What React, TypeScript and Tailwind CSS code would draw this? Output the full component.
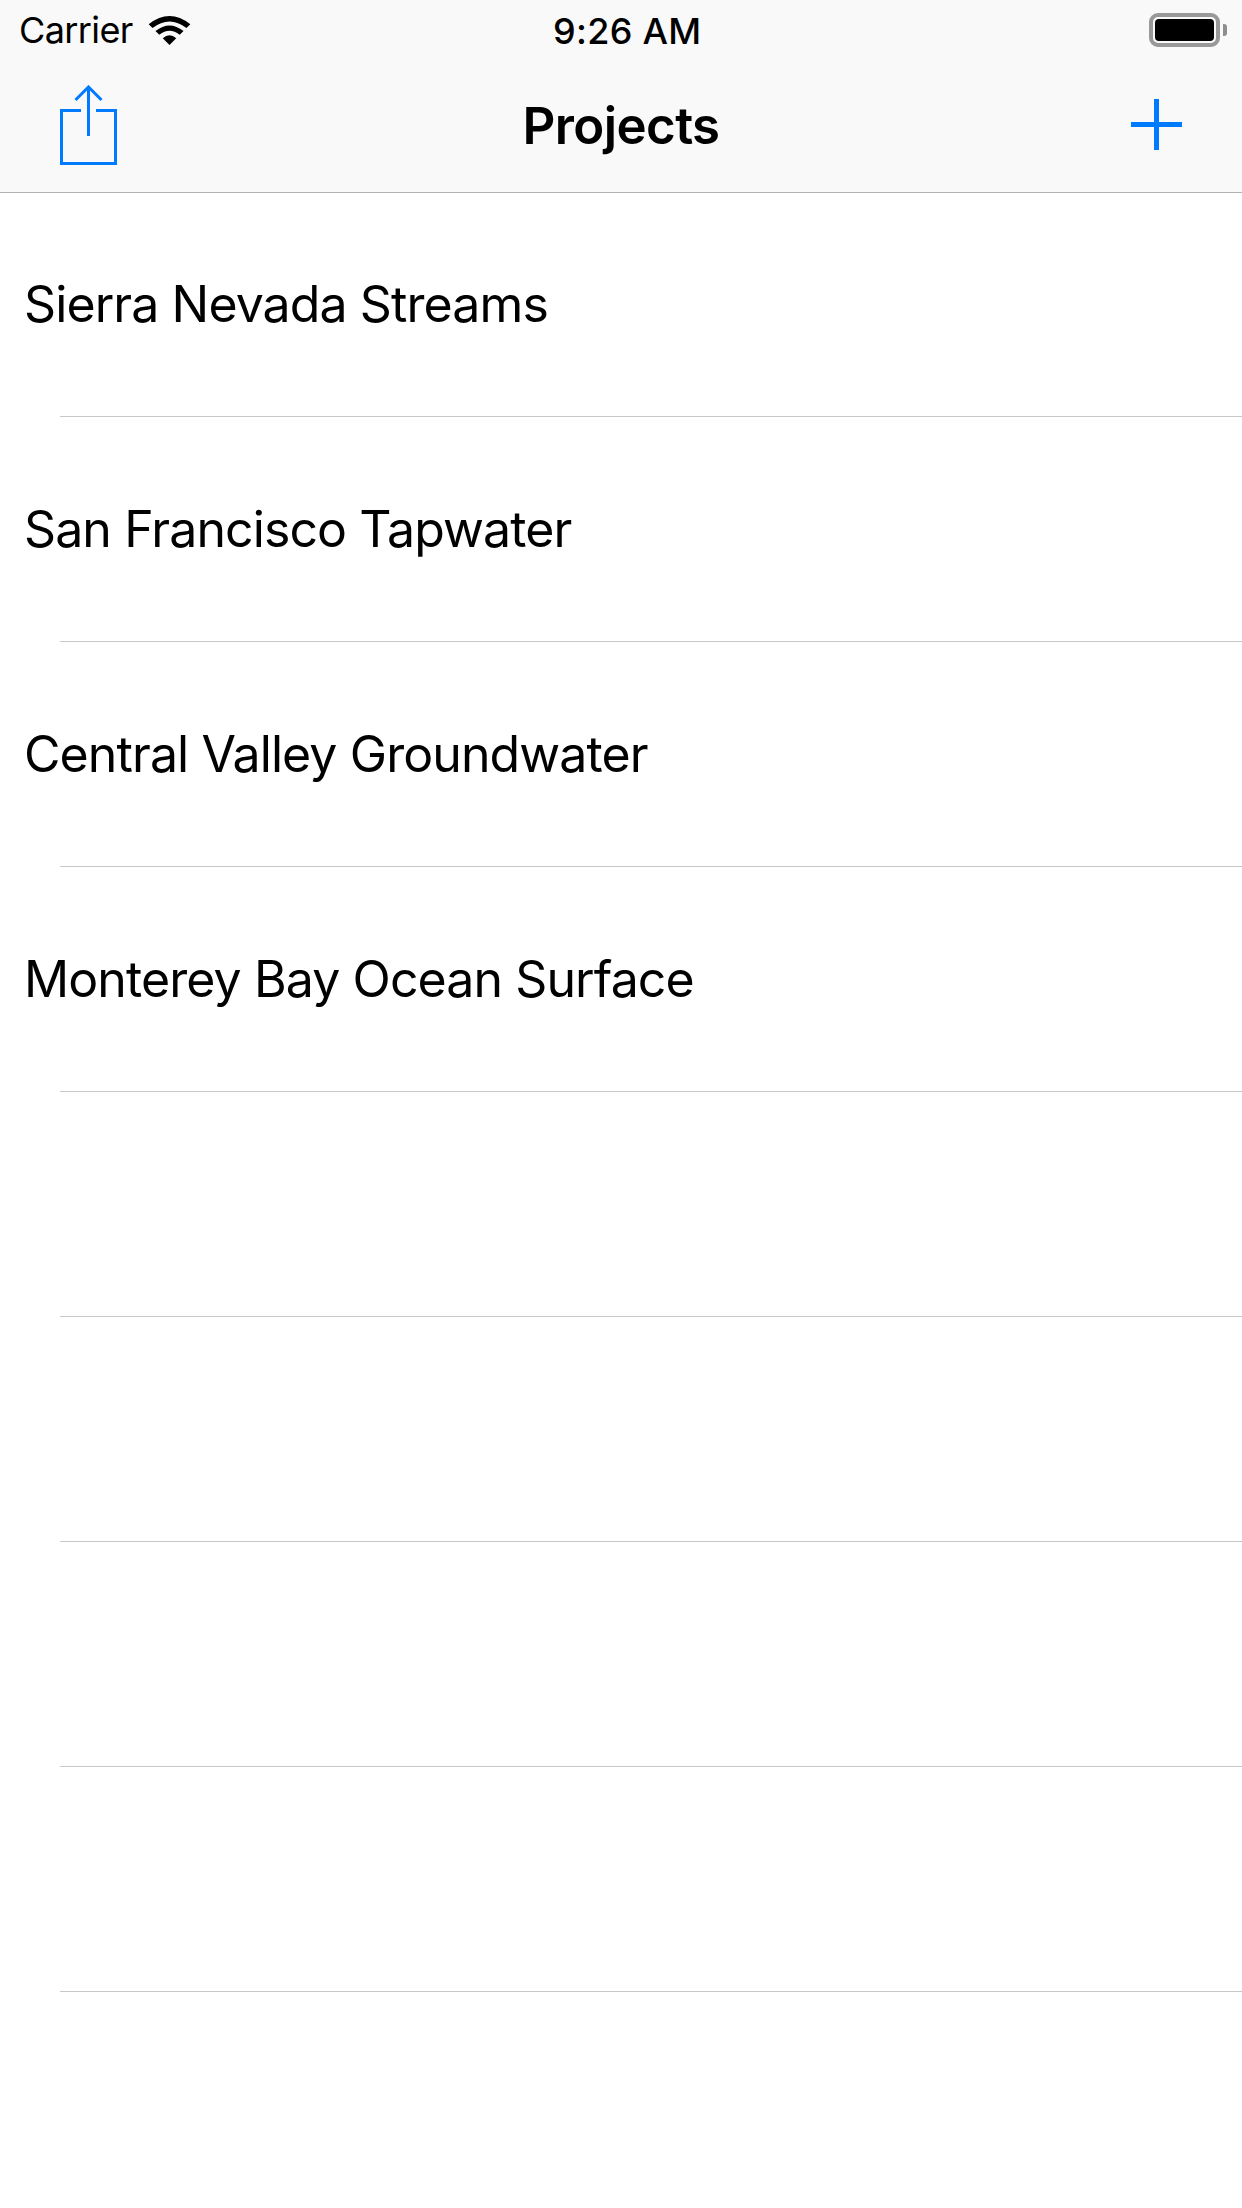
import React from 'react';

const PROJECTS = [
  'Sierra Nevada Streams',
  'San Francisco Tapwater',
  'Central Valley Groundwater',
  'Monterey Bay Ocean Surface',
  '',
  '',
  '',
  '',
];

const WifiIcon = () => (
  <svg width="43" height="31" viewBox="0 0 44 32" className="block">
    <path d="M22 31 L15 24 Q22 18 29 24 Z" fill="#000" />
    <path d="M11.5 20.5 L7.5 16.5 Q22 5 36.5 16.5 L32.5 20.5 Q22 12 11.5 20.5 Z" fill="#000" />
    <path d="M4.5 13.5 L0.5 9.5 Q22 -7.5 43.5 9.5 L39.5 13.5 Q22 0 4.5 13.5 Z" fill="#000" />
  </svg>
);

const BatteryIcon = () => (
  <div className="flex items-center gap-[3px]">
    <div className="w-[71px] h-[34px] rounded-[9px] border-[4px] border-[#999999] p-[2px]">
      <div className="w-full h-full rounded-[4px] bg-black" />
    </div>
    <div className="w-[4px] h-[12px] rounded-r-[3px] bg-[#8e8e8e]" />
  </div>
);

const ShareIcon = () => (
  <svg width="57" height="81" viewBox="0 0 57 81" fill="none" stroke="#007aff" strokeWidth="3" className="block mb-[1px]">
    <path d="M21 25.5 H1.5 V78.5 H55.5 V25.5 H36" />
    <path d="M28.5 2 V51" />
    <path d="M15.5 15 L28.5 2 L41.5 15" />
  </svg>
);

const PlusIcon = () => (
  <svg width="51" height="51" viewBox="0 0 51 51" className="block mb-[3px]" fill="#007aff">
    <rect x="23" y="0" width="5" height="51" />
    <rect x="0" y="23" width="51" height="5" />
  </svg>
);

export default function App() {
  return (
    <div className="w-[1242px] h-[2208px] bg-white overflow-hidden text-black font-['Inter',sans-serif]">
      <div className="bg-[#f9f9f9] border-b border-[#b2b2b2] h-[193px]">
        <div className="relative h-[60px] flex items-center justify-between pl-[19px] pr-[15px]">
          <div className="flex items-center gap-[15px]">
            <span className="text-[36px] leading-[62px] tracking-[-0.6px]">Carrier</span>
            <WifiIcon />
          </div>
          <span className="absolute left-[553px] top-0 text-[36px] leading-[62px] font-medium tracking-[0.3px]">9:26 AM</span>
          <BatteryIcon />
        </div>
        <div className="relative h-[132px] flex items-center justify-between pl-[60px] pr-[60px]">
          <ShareIcon />
          <span className="absolute left-0 right-0 text-center text-[51px] font-semibold tracking-[-0.6px]">Projects</span>
          <PlusIcon />
        </div>
      </div>
      <div className="-mt-[1px]">
        {PROJECTS.map((name, index) => (
          <div key={index} className="h-[225px] pl-[24px] flex items-center relative">
            <span className="text-[50px] tracking-[-0.9px]">{name}</span>
            <div className="absolute left-[60px] right-0 bottom-0 h-[1px] bg-[#c8c7cc]" />
          </div>
        ))}
      </div>
    </div>
  );
}
